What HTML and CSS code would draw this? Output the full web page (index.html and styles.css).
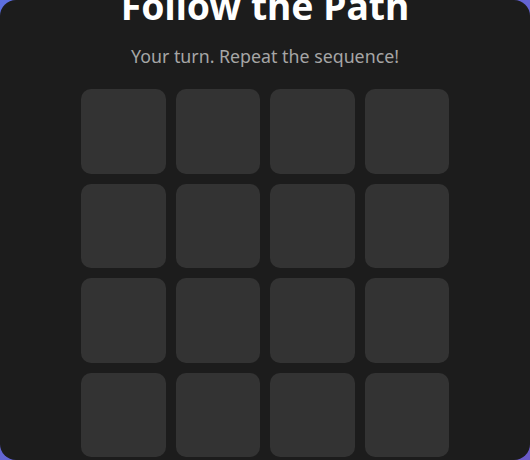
FILE: index.html
```html
<!DOCTYPE html>
<html lang="en">
<head>
<meta charset="utf-8">
<title>Follow the Path</title>
<link rel="stylesheet" href="styles.css">
</head>
<body>
<main class="card">
  <h1 class="title">Follow the Path</h1>
  <p class="status">Your turn. Repeat the sequence!</p>
  <div class="grid">
    <div class="tile"></div><div class="tile"></div><div class="tile"></div><div class="tile"></div>
    <div class="tile"></div><div class="tile"></div><div class="tile"></div><div class="tile"></div>
    <div class="tile"></div><div class="tile"></div><div class="tile"></div><div class="tile"></div>
    <div class="tile"></div><div class="tile"></div><div class="tile"></div><div class="tile"></div>
  </div>
</main>
</body>
</html>
```

FILE: styles.css
```css
html, body {
  margin: 0;
  height: 100%;
}
body {
  background: linear-gradient(135deg, #5d6fe0 0%, #6a5ac8 100%);
  overflow: hidden;
  font-family: "Noto Sans", "Open Sans", sans-serif;
}
.card {
  box-sizing: border-box;
  height: 100%;
  background: #1c1c1c;
  border-radius: 16px;
  overflow: hidden;
  display: flex;
  flex-direction: column;
  justify-content: flex-end;
  align-items: center;
  padding-bottom: 3px;
}
.title {
  margin: 0 0 16px;
  font-size: 37.3px;
  font-weight: 700;
  line-height: 44px;
  color: #ffffff;
  flex-shrink: 0;
}
.status {
  margin: 0 0 21px;
  font-size: 17.8px;
  line-height: 24px;
  color: #a6a6a6;
  flex-shrink: 0;
}
.grid {
  display: grid;
  grid-template-columns: repeat(4, 84.5px);
  gap: 10px;
  flex-shrink: 0;
}
.tile {
  aspect-ratio: 1;
  background: #333333;
  border-radius: 10px;
}
```
